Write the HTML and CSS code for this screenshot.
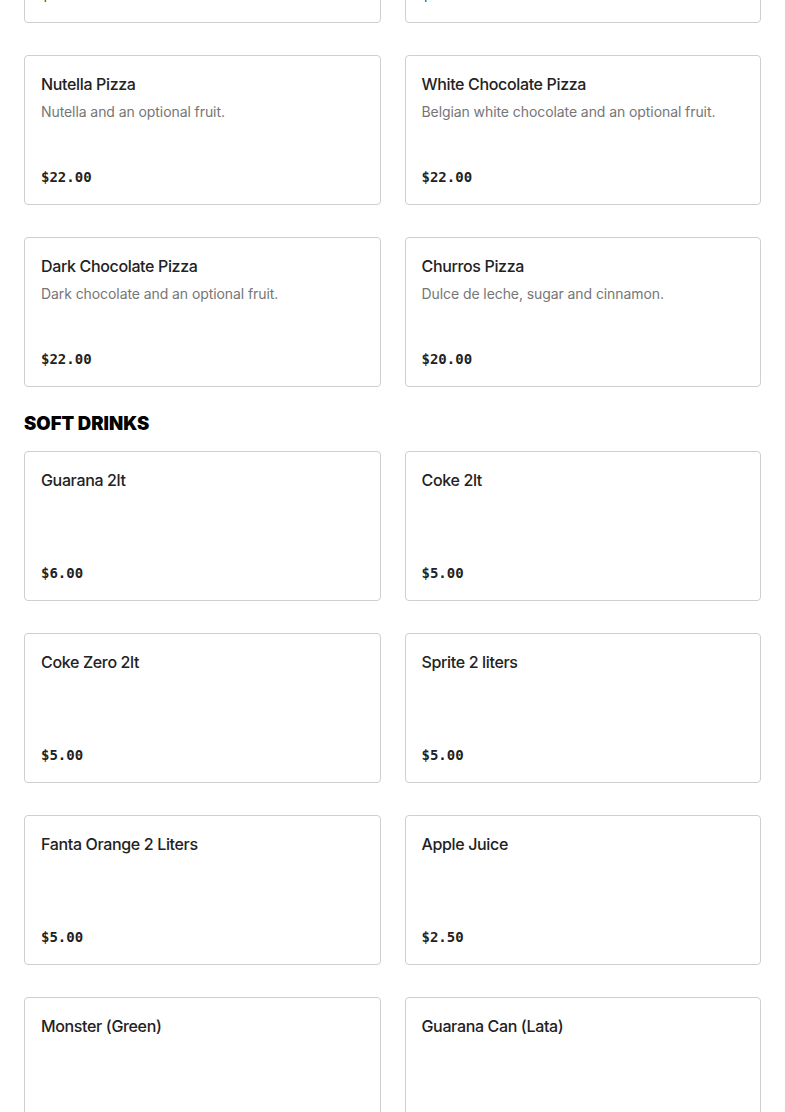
FILE: index.html
```html
<!DOCTYPE html>
<html>
<head>
<meta charset="utf-8">
<link rel="stylesheet" href="styles.css">
</head>
<body>
<main class="menu">
  <section class="section">
    <div class="grid">
      <div class="card"><div class="title">Strawberry Pizza</div><div class="desc">Strawberry and chocolate.</div><div class="price">$22.00</div></div>
      <div class="card"><div class="title">Banana Pizza</div><div class="desc">Banana, sugar and cinnamon.</div><div class="price">$20.00</div></div>
      <div class="card"><div class="title">Nutella Pizza</div><div class="desc">Nutella and an optional fruit.</div><div class="price">$22.00</div></div>
      <div class="card"><div class="title">White Chocolate Pizza</div><div class="desc">Belgian white chocolate and an optional fruit.</div><div class="price">$22.00</div></div>
      <div class="card"><div class="title">Dark Chocolate Pizza</div><div class="desc">Dark chocolate and an optional fruit.</div><div class="price">$22.00</div></div>
      <div class="card"><div class="title">Churros Pizza</div><div class="desc">Dulce de leche, sugar and cinnamon.</div><div class="price">$20.00</div></div>
    </div>
  </section>
  <section class="section">
    <h2 class="heading">SOFT DRINKS</h2>
    <div class="grid">
      <div class="card"><div class="title">Guarana 2lt</div><div class="price">$6.00</div></div>
      <div class="card"><div class="title">Coke 2lt</div><div class="price">$5.00</div></div>
      <div class="card"><div class="title">Coke Zero 2lt</div><div class="price">$5.00</div></div>
      <div class="card"><div class="title">Sprite 2 liters</div><div class="price">$5.00</div></div>
      <div class="card"><div class="title">Fanta Orange 2 Liters</div><div class="price">$5.00</div></div>
      <div class="card"><div class="title">Apple Juice</div><div class="price">$2.50</div></div>
      <div class="card"><div class="title">Monster (Green)</div><div class="price">$4.00</div></div>
      <div class="card"><div class="title">Guarana Can (Lata)</div><div class="price">$2.50</div></div>
    </div>
  </section>
</main>
</body>
</html>
```

FILE: styles.css
```css
html, body {
  margin: 0;
  padding: 0;
  background: #fff;
}
body {
  font-family: "Inter", "Noto Sans", "Liberation Sans", sans-serif;
  color: #222;
}
.menu {
  margin-top: -127px;
  padding: 0 24px;
  display: flex;
  flex-direction: column;
}
.section + .section {
  margin-top: 24px;
}
.heading {
  margin: 0 0 16px;
  font-size: 18.5px;
  line-height: 24px;
  font-weight: 900;
  color: #000;
}
.grid {
  display: grid;
  grid-template-columns: 1fr 1fr;
  column-gap: 24px;
  row-gap: 32px;
}
.card {
  box-sizing: border-box;
  height: 150px;
  border: 1px solid #cfcfcf;
  border-radius: 4px;
  padding: 16px;
  display: flex;
  flex-direction: column;
}
.title {
  font-size: 16px;
  line-height: 24px;
  font-weight: 500;
  letter-spacing: -0.35px;
  color: #222;
}
.desc {
  margin-top: 6px;
  font-size: 14px;
  line-height: 20px;
  letter-spacing: -0.08px;
  color: #767676;
}
.price {
  margin-top: auto;
  font-family: "DejaVu Sans Mono", "Liberation Mono", monospace;
  font-weight: bold;
  font-size: 14px;
  line-height: 22px;
  color: #222;
}
```
